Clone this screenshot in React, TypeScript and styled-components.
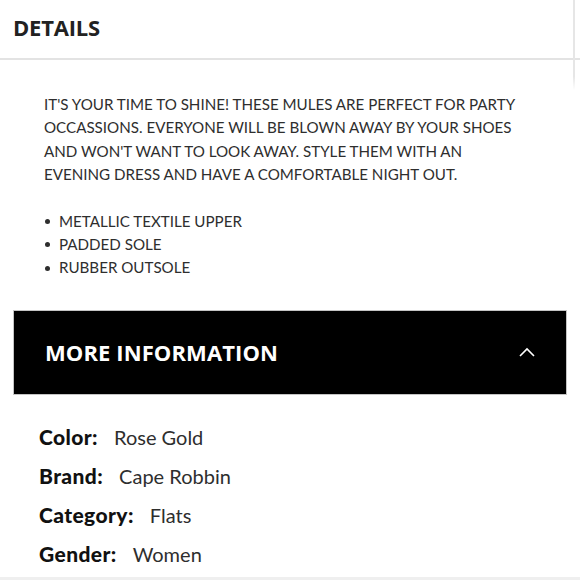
import React from 'react';
import styled, { createGlobalStyle } from 'styled-components';

const GlobalStyle = createGlobalStyle`
  html, body {
    margin: 0;
    padding: 0;
    background: #ffffff;
  }
  *, *::before, *::after {
    box-sizing: border-box;
  }
`;

const Page = styled.div`
  position: relative;
  width: 580px;
  height: 580px;
  overflow: hidden;
  background: #fff;
  font-family: Lato, 'Noto Sans', sans-serif;
`;

const ScrollLine = styled.div`
  position: absolute;
  top: 0;
  right: 5px;
  width: 2px;
  height: 90px;
  background: linear-gradient(#e6e6e6 85%, rgba(230, 230, 230, 0));
`;

const Header = styled.header`
  display: flex;
  align-items: center;
  height: 60px;
  padding: 0 13px 5px;
  border-bottom: 2px solid #e3e3e3;
`;

const Title = styled.h2`
  margin: 0;
  font-family: 'Open Sans', sans-serif;
  font-weight: 700;
  font-size: 22px;
  letter-spacing: -0.2px;
  color: #222;
`;

const Description = styled.section`
  padding: 33px 44px 0;
  color: #2e2e2e;
  font-size: 15.15px;
  line-height: 23.4px;
`;

const Paragraph = styled.p`
  margin: 0;
  white-space: nowrap;
`;

const Bullets = styled.ul`
  list-style: none;
  margin: 23px 0 0;
  padding: 0;
`;

const Bullet = styled.li`
  display: flex;
  align-items: center;
  gap: 9px;
  &::before {
    content: '';
    width: 5px;
    height: 5px;
    margin-left: 1px;
    border-radius: 50%;
    background: #2e2e2e;
  }
`;

const InfoBar = styled.div`
  display: flex;
  align-items: center;
  justify-content: space-between;
  width: 554px;
  height: 85px;
  margin: 30px 13px 0;
  padding: 0 31px 0 31px;
  background: #000;
  border: 1px solid #c4c4c4;
`;

const InfoTitle = styled.h3`
  margin: 0;
  font-family: 'Open Sans', sans-serif;
  font-weight: 700;
  font-size: 22px;
  letter-spacing: 0.1px;
  color: #fff;
`;

const Chevron = styled.svg`
  width: 16px;
  height: 10px;
`;

const InfoList = styled.dl`
  margin: 0;
  padding: 22px 39px 0;
`;

const InfoRow = styled.div`
  display: flex;
  align-items: baseline;
  gap: 16px;
  height: 39px;
  line-height: 39px;
`;

const Label = styled.dt`
  font-size: 21px;
  font-weight: 900;
  letter-spacing: 0.4px;
  color: #111;
`;

const Value = styled.dd`
  margin: 0;
  font-size: 20px;
  font-weight: 400;
  color: #2e2e2e;
`;

const BottomStrip = styled.div`
  position: absolute;
  left: 0;
  right: 0;
  bottom: 0;
  height: 3px;
  background: #efefef;
`;

const lines = [
  "IT'S YOUR TIME TO SHINE! THESE MULES ARE PERFECT FOR PARTY",
  'OCCASSIONS. EVERYONE WILL BE BLOWN AWAY BY YOUR SHOES',
  "AND WON'T WANT TO LOOK AWAY. STYLE THEM WITH AN",
  'EVENING DRESS AND HAVE A COMFORTABLE NIGHT OUT.',
];

const info: [string, string][] = [
  ['Color:', 'Rose Gold'],
  ['Brand:', 'Cape Robbin'],
  ['Category:', 'Flats'],
  ['Gender:', 'Women'],
];

export default function App() {
  return (
    <Page>
      <GlobalStyle />
      <Header>
        <Title>DETAILS</Title>
      </Header>
      <ScrollLine />
      <Description>
        <Paragraph>
          {lines.map((line, i) => (
            <React.Fragment key={i}>
              {line}
              {i < lines.length - 1 && <br />}
            </React.Fragment>
          ))}
        </Paragraph>
        <Bullets>
          <Bullet>METALLIC TEXTILE UPPER</Bullet>
          <Bullet>PADDED SOLE</Bullet>
          <Bullet>RUBBER OUTSOLE</Bullet>
        </Bullets>
      </Description>
      <InfoBar>
        <InfoTitle>MORE INFORMATION</InfoTitle>
        <Chevron viewBox="0 0 16 10">
          <path d="M1 9 L8 2 L15 9" fill="none" stroke="#fff" strokeWidth="1.6" />
        </Chevron>
      </InfoBar>
      <InfoList>
        {info.map(([label, value]) => (
          <InfoRow key={label}>
            <Label>{label}</Label>
            <Value>{value}</Value>
          </InfoRow>
        ))}
      </InfoList>
      <BottomStrip />
    </Page>
  );
}
